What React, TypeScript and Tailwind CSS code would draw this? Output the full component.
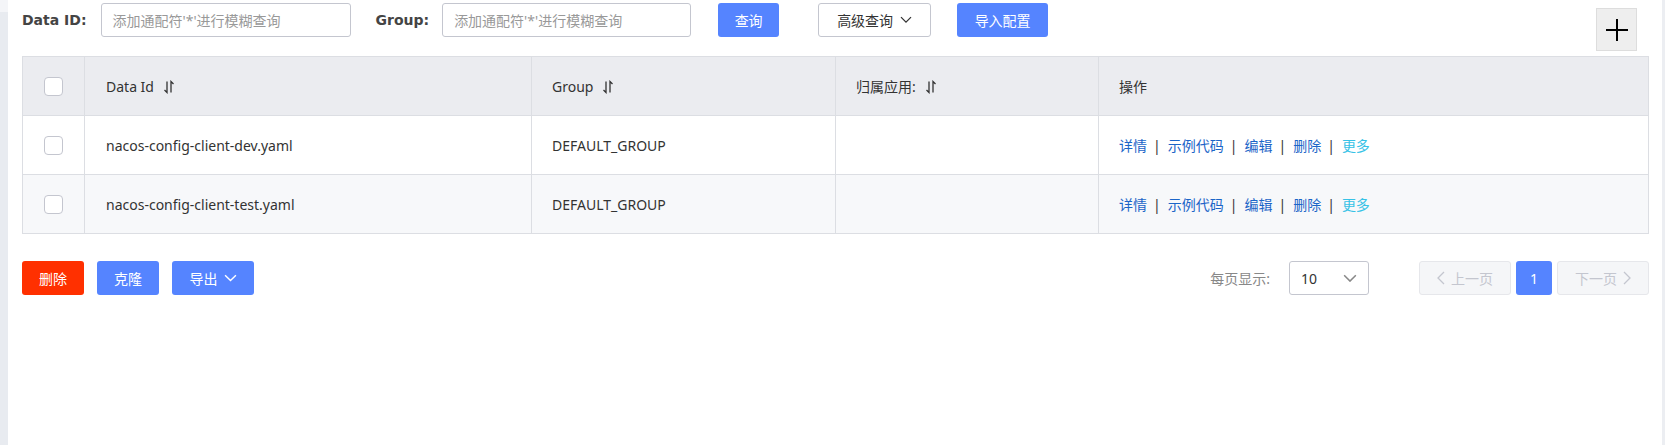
import React from "react";

const SortIcon = () => (
  <svg width="12" height="14" viewBox="0 0 12 14" className="inline-block ml-[9px] align-[-2px]" fill="none" stroke="#333" strokeWidth="1.3">
    <path d="M4 1.5 V12.5 L1.5 10" />
    <path d="M8 12.5 V1.5 L10.5 4" />
  </svg>
);

const ChevronDown = ({ color = "#333", size = 12 }: { color?: string; size?: number }) => (
  <svg width={size} height={size * 0.6} viewBox="0 0 12 7" fill="none" stroke={color} strokeWidth="1.3">
    <path d="M1 1 L6 6 L11 1" />
  </svg>
);

const Checkbox = () => (
  <div className="w-[19px] h-[19px] rounded-[4px] border border-[#c4c6cf] bg-white mx-auto" />
);

const Sep = () => <span className="ml-[6px] mr-[7px] text-[#333]">|</span>;

const Actions = () => (
  <div className="flex items-center">
    <span className="text-[#1b65c8]">详情</span>
    <Sep />
    <span className="text-[#1b65c8]">示例代码</span>
    <Sep />
    <span className="text-[#1b65c8]">编辑</span>
    <Sep />
    <span className="text-[#1b65c8]">删除</span>
    <Sep />
    <span className="text-[#36c2e6]">更多</span>
  </div>
);

const rows = [
  { id: "nacos-config-client-dev.yaml", group: "DEFAULT_GROUP", bg: "bg-white" },
  { id: "nacos-config-client-test.yaml", group: "DEFAULT_GROUP", bg: "bg-[#f7f8fa]" },
];

export default function App() {
  const font = { fontFamily: '"Noto Sans", "Noto Sans CJK SC", sans-serif' };
  return (
    <div className="flex h-[445px] bg-white text-[14px] text-[#333]" style={font}>
      <div className="w-[8px] flex flex-col">
        <div className="h-[12px] bg-[#f4f5f8]" />
        <div className="flex-1 bg-[#e8ebf0]" />
      </div>
      <div className="flex-1 pl-[14px] pr-[13px] pt-[3px]">
        {/* toolbar */}
        <div className="flex items-start h-[53px]">
          <div className="h-[34px] flex items-center font-bold text-[#444] mr-[14px]" style={{ fontFamily: '"DejaVu Sans", sans-serif' }}>
            Data ID:
          </div>
          <div className="w-[250px] h-[34px] border border-[#c4c6cf] rounded-[3px] flex items-center pl-[11px] text-[#999]">
            添加通配符'*'进行模糊查询
          </div>
          <div className="h-[34px] flex items-center font-bold text-[#444] ml-[25px] mr-[13px]" style={{ fontFamily: '"DejaVu Sans", sans-serif' }}>
            Group:
          </div>
          <div className="w-[249px] h-[34px] border border-[#c4c6cf] rounded-[3px] flex items-center pl-[11px] text-[#999]">
            添加通配符'*'进行模糊查询
          </div>
          <button className="ml-[27px] w-[61px] h-[34px] rounded-[3px] bg-[#5584ff] text-white">查询</button>
          <button className="ml-[39px] w-[113px] h-[34px] rounded-[3px] border border-[#c4c6cf] bg-white text-[#333] flex items-center justify-center gap-[7px]">
            高级查询
            <ChevronDown />
          </button>
          <button className="ml-[26px] w-[91px] h-[34px] rounded-[3px] bg-[#5584ff] text-white">导入配置</button>
          <div className="ml-auto mr-[12px] mt-[5px] w-[41px] h-[43px] bg-[#eeeeee] border border-[#dddddd] flex items-center justify-center">
            <svg width="24" height="24" viewBox="0 0 24 24" fill="none" stroke="#000" strokeWidth="2">
              <path d="M12 1 V23 M1 12 H23" />
            </svg>
          </div>
        </div>

        {/* table */}
        <table className="w-full border-collapse table-fixed border border-[#dcdee3]">
          <colgroup>
            <col className="w-[62px]" />
            <col className="w-[447px]" />
            <col className="w-[304px]" />
            <col className="w-[263px]" />
            <col />
          </colgroup>
          <thead>
            <tr className="bg-[#ebecf0] h-[59px]">
              <th className="border border-[#dcdee3] font-normal">
                <Checkbox />
              </th>
              <th className="border border-[#dcdee3] font-normal text-left pl-[21px]">
                Data Id<SortIcon />
              </th>
              <th className="border border-[#dcdee3] font-normal text-left pl-[20px]">
                Group<SortIcon />
              </th>
              <th className="border border-[#dcdee3] font-normal text-left pl-[20px]">
                归属应用:<SortIcon />
              </th>
              <th className="border border-[#dcdee3] font-normal text-left pl-[20px]">操作</th>
            </tr>
          </thead>
          <tbody>
            {rows.map((r) => (
              <tr key={r.id} className={`${r.bg} h-[59px]`}>
                <td className="border border-[#dcdee3]">
                  <Checkbox />
                </td>
                <td className="border border-[#dcdee3] pl-[21px]">{r.id}</td>
                <td className="border border-[#dcdee3] pl-[20px]">{r.group}</td>
                <td className="border border-[#dcdee3]" />
                <td className="border border-[#dcdee3] pl-[20px]">
                  <Actions />
                </td>
              </tr>
            ))}
          </tbody>
        </table>

        {/* footer */}
        <div className="mt-[27px] flex items-center h-[34px]">
          <button className="w-[62px] h-[34px] rounded-[3px] bg-[#ff3000] text-white">删除</button>
          <button className="ml-[13px] w-[62px] h-[34px] rounded-[3px] bg-[#5584ff] text-white">克隆</button>
          <button className="ml-[13px] w-[82px] h-[34px] rounded-[3px] bg-[#5584ff] text-white flex items-center justify-center gap-[6px]">
            导出
            <ChevronDown color="#fff" size={13} />
          </button>

          <div className="ml-auto flex items-center">
            <span className="text-[#888] mr-[19px]">每页显示:</span>
            <div className="w-[80px] h-[34px] border border-[#c4c6cf] rounded-[3px] flex items-center justify-between pl-[11px] pr-[11px]">
              <span className="text-[#333]">10</span>
              <ChevronDown color="#888" size={14} />
            </div>
            <div className="ml-[50px] w-[92px] h-[34px] rounded-[3px] border border-[#e6e7eb] bg-[#f5f6f8] flex items-center justify-center gap-[6px] text-[#c4c6cf]">
              <svg width="8" height="14" viewBox="0 0 8 14" fill="none" stroke="#c4c6cf" strokeWidth="1.3">
                <path d="M7 1 L1 7 L7 13" />
              </svg>
              上一页
            </div>
            <div className="ml-[5px] w-[36px] h-[34px] rounded-[3px] bg-[#5584ff] text-white flex items-center justify-center">1</div>
            <div className="ml-[5px] w-[92px] h-[34px] rounded-[3px] border border-[#e6e7eb] bg-[#f5f6f8] flex items-center justify-center gap-[6px] text-[#c4c6cf]">
              下一页
              <svg width="8" height="14" viewBox="0 0 8 14" fill="none" stroke="#c4c6cf" strokeWidth="1.3">
                <path d="M1 1 L7 7 L1 13" />
              </svg>
            </div>
          </div>
        </div>
      </div>
      <div className="w-[3px] bg-[#eceef2]" />
    </div>
  );
}
